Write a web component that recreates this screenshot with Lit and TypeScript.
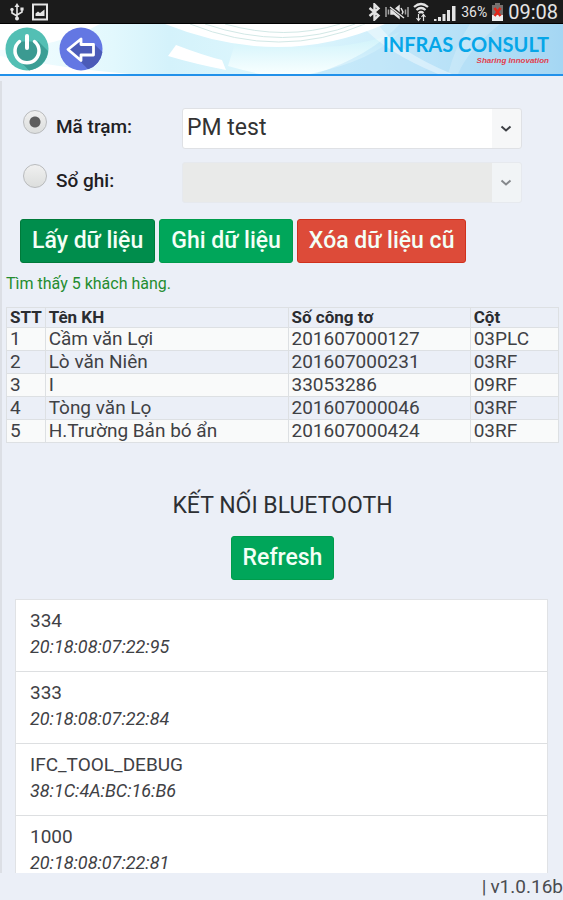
import { LitElement, html, css } from "lit";
import { customElement, state } from "lit/decorators.js";

const customers = [
  ["1", "Cầm văn Lợi", "201607000127", "03PLC"],
  ["2", "Lò văn Niên", "201607000231", "03RF"],
  ["3", "I", "33053286", "09RF"],
  ["4", "Tòng văn Lọ", "201607000046", "03RF"],
  ["5", "H.Trường Bản bó ẩn", "201607000424", "03RF"],
];

const devices = [
  ["334", "20:18:08:07:22:95"],
  ["333", "20:18:08:07:22:84"],
  ["IFC_TOOL_DEBUG", "38:1C:4A:BC:16:B6"],
  ["1000", "20:18:08:07:22:81"],
];

@customElement("status-bar")
class StatusBar extends LitElement {
  static styles = css`
    :host {
      display: flex;
      align-items: center;
      justify-content: space-between;
      height: 24px;
      padding: 0 5px 0 9px;
      background: #1b1b1b;
      border-bottom: 1px solid #000;
      box-sizing: border-box;
      color: #e4e4e4;
      font-family: Roboto, sans-serif;
    }
    .group { display: flex; align-items: center; gap: 4px; }
    .left { gap: 7px; }
    svg { display: block; }
    .pct { font-size: 14px; }
    .clock { font-size: 20px; line-height: 24px; }
  `;
  render() {
    return html`
      <div class="group left">
        <svg width="16" height="18" viewBox="0 0 16 18" fill="none" stroke="#e4e4e4" stroke-width="1.6">
          <path d="M8 3V15M3 7V10L8 13M13 6V9L8 12" />
          <path d="M8 0L10.500 4H5.500Z" fill="#e4e4e4" stroke="none" />
          <circle cx="8" cy="15.500" r="2" fill="#e4e4e4" stroke="none" />
          <circle cx="3" cy="6.500" r="1.700" fill="#e4e4e4" stroke="none" />
          <path d="M11.400 4.500h3.200v3h-3.200z" fill="#e4e4e4" stroke="none" />
        </svg>
        <svg width="16" height="18" viewBox="0 0 16 18">
          <rect x="1" y="1.500" width="14" height="15" fill="none" stroke="#e4e4e4" stroke-width="2" />
          <path d="M3.500 13V10.500L6 8.500L8 10L12.500 6.500V13Z" fill="#e4e4e4" />
        </svg>
      </div>
      <div class="group">
        <svg width="13" height="18" viewBox="0 0 13 18" fill="none" stroke="#e4e4e4" stroke-width="2.400">
          <path d="M1.500 5L10.500 12.500L6.500 16.500V1.500L10.500 5.500L1.500 13" />
        </svg>
        <svg width="24" height="16" viewBox="0 0 24 16" fill="none" stroke="#e4e4e4" stroke-width="1.500">
          <path d="M1 3V13M3.500 5.500V10.500M23 3V13M20.500 5.500V10.500" stroke="#a5a5a5" />
          <path d="M6 6H9L14 2V14L9 10H6Z" fill="#e4e4e4" />
          <path d="M16 4L18 8L16 12" />
          <path d="M5 2L19 14" stroke="#1b1b1b" stroke-width="3" />
          <path d="M5 3L19 14" />
        </svg>
        <svg width="16" height="20" viewBox="0 0 16 20" fill="none" stroke="#e4e4e4" stroke-width="2.200">
          <path d="M1 5Q8-1 15 5M3.500 8Q8 4 12.500 8M5.500 11Q8 9 10.500 11" />
          <path d="M5.500 12V18M3.500 16L5.500 18.500L7.500 16M10.500 19V13M8.500 15L10.500 12.500L12.500 15" stroke-width="1.200" />
        </svg>
        <svg width="24" height="18" viewBox="0 0 24 18" fill="#e4e4e4">
          <path d="M1 16h2.500v2H1zM5 14h3v4H5zM9.500 11h3v7h-3zM14 7h3v11h-3zM19 3h3.500v15H19z" />
        </svg>
        <span class="pct">36%</span>
        <svg width="13" height="18" viewBox="0 0 13 18">
          <path d="M4 0H9V2H12V18H1V2H4Z" fill="#77706e" />
          <path d="M1 12H12V18H1Z" fill="#eee" />
          <path d="M3.500 5L9.500 13M9.500 5L3.500 13" stroke="#e32619" stroke-width="2.500" />
        </svg>
        <span class="clock">09:08</span>
      </div>
    `;
  }
}

@customElement("app-banner")
class AppBanner extends LitElement {
  static styles = css`
    :host {
      display: flex;
      position: relative;
      align-items: center;
      height: 52px;
      padding: 0 14px 0 5px;
      gap: 10px;
      box-sizing: border-box;
      border-bottom: 2px solid #2291ea;
      background: #dff4fc;
    }
    .sky { position: absolute; inset: 0; width: 100%; height: 100%; }
    .round {
      position: relative;
      width: 44px;
      height: 44px;
      padding: 0;
      border: 0;
      background: none;
    }
    .round svg { display: block; }
    .brand {
      position: relative;
      margin-left: auto;
      display: flex;
      flex-direction: column;
      align-items: flex-end;
    }
    .name {
      font: bold 20px/24px "Liberation Sans Narrow", Lato, sans-serif;
      color: #06a6e8;
    }
    .tag {
      font: italic bold 8px/10px "Liberation Sans", sans-serif;
      color: #e2404e;
    }
  `;
  render() {
    return html`
      <svg class="sky" viewBox="0 0 563 50" preserveAspectRatio="none" aria-hidden="true">
        <defs>
          <linearGradient id="g" x1="0" x2="1" y1="0" y2="0">
            <stop offset="0" stop-color="#f4fdff" />
            <stop offset=".2" stop-color="#e2f8fd" />
            <stop offset=".3" stop-color="#d4f2fb" />
            <stop offset=".5" stop-color="#def7fd" />
            <stop offset=".75" stop-color="#c9eafa" />
            <stop offset="1" stop-color="#a3d5f1" />
          </linearGradient>
          <linearGradient id="w" x1="0" x2="0" y1="0" y2="1">
            <stop offset=".2" stop-color="#d4f4fb" />
            <stop offset="1" stop-color="#f8ffff" />
          </linearGradient>
        </defs>
        <rect width="563" height="50" fill="url(#g)" />
        <path d="M0 0H100Q60 22 0 26Z" fill="#fff" />
        <path d="M0 50V32Q60 44 130 50Z" fill="#fff" />
        <path d="M176 21Q205 32 222 36L226 46Q195 40 168 32Z" fill="#fff" />
        <path d="M236 16Q285 26 340 22Q380 16 400 8Q375 36 310 50H260Q242 46 228 42Z" fill="url(#w)" />
        <path d="M165 0Q280 46 385 0Z" fill="#fff" />
        <path d="M190 0Q280 36 365 0M205 0Q285 27 355 0M225 0Q285 17 340 0" fill="none" stroke="#d2e8e6" stroke-width="1" />
        <path d="M563 0V50H315Q370 32 400 0Z" fill="#a8d9f5" opacity=".35" />
        <path d="M448 50Q456 20 470 0H500Q468 26 458 50Z" fill="#fff" opacity=".2" />
        <path d="M360 0Q385 28 438 50H452Q395 26 378 0Z" fill="#fff" opacity=".4" />
      </svg>
      <button class="round" aria-label="Thoát">
        <svg width="44" height="44" viewBox="0 0 44 44">
          <circle cx="22" cy="22" r="21.500" fill="#53bfb4" />
          <path d="M33 14L43 24A21.500 21.500 0 0 1 24 43.400L14 33Z" fill="#3b9e95" />
          <path d="M14.500 14.500A12 12 0 1 0 29.500 14.500" fill="#3b9a91" stroke="#fff" stroke-width="3.500" stroke-linecap="round" />
          <path d="M22 9V21" stroke="#fff" stroke-width="4" stroke-linecap="round" />
        </svg>
      </button>
      <button class="round" aria-label="Quay lại">
        <svg width="44" height="44" viewBox="0 0 44 44">
          <circle cx="22" cy="22" r="21.500" fill="#6377e3" />
          <path d="M35 17L43.400 25A21.500 21.500 0 0 1 29 42.300L16 29Z" fill="#4b5bb8" />
          <path d="M9 22.500L22 12V17.500H34.500V28H22V33.500Z" fill="#4b5bb8" stroke="#fff" stroke-width="2.800" stroke-linejoin="round" />
        </svg>
      </button>
      <div class="brand">
        <span class="name">INFRAS CONSULT</span>
        <span class="tag">Sharing Innovation</span>
      </div>
    `;
  }
}

@customElement("app-root")
class AppRoot extends LitElement {
  @state() mode = "station";

  static styles = css`
    :host {
      display: flex;
      flex-direction: column;
      height: 100vh;
      overflow: hidden;
      background: #ebeff7;
      color: #2d2f33;
      font-family: Roboto, sans-serif;
    }
    main {
      flex: 1;
      min-height: 0;
      margin-top: 5px;
      border-left: 2px solid #dcdfe5;
      overflow-y: auto;
      scrollbar-width: none;
    }
    .form {
      display: grid;
      grid-template-columns: 24px 117px 1fr;
      column-gap: 9px;
      row-gap: 13px;
      padding: 27px 41px 0 21px;
    }
    .radio {
      appearance: none;
      width: 24px;
      height: 24px;
      margin: 2px 0 0;
      border: 1px solid #b9bbbd;
      border-radius: 50%;
      background: linear-gradient(#f0f0f0, #dcdedd);
    }
    .radio:checked {
      background: radial-gradient(circle, #5e5e5e 5px, transparent 6px), linear-gradient(#f0f0f0, #dcdedd);
    }
    .label { font-size: 19px; font-weight: 500; line-height: 38px; color: #1f2023; }
    .pick { position: relative; display: grid; }
    .pick select {
      appearance: none;
      height: 41px;
      width: 100%;
      padding: 0 34px 3px 4px;
      border: 1px solid #dfe1e5;
      border-radius: 3px;
      background: linear-gradient(90deg, transparent calc(100% - 29px), #f6f7f8 0) #fff;
      color: #333;
      font: 23px Roboto, sans-serif;
    }
    .pick select:disabled {
      border-color: #e6e9ee;
      background: linear-gradient(90deg, transparent calc(100% - 29px), #f1f4f6 0) #e9eae9;
      opacity: 1;
    }
    .pick svg { position: absolute; right: 10px; top: 17px; pointer-events: none; }
    .actions { display: flex; gap: 4px; padding: 16px 0 0 18px; }
    .btn {
      height: 44px;
      padding: 0 11px 2px;
      border: 1px solid #009c4c;
      border-radius: 3px;
      background: #00a65a;
      color: #f3fff6;
      font: 500 23px Roboto, sans-serif;
      white-space: nowrap;
    }
    .btn.dark { background: #008d4c; border-color: #007a3a; }
    .btn.red { background: #dd4b39; border-color: #d0301c; }
    .found { margin: 0; padding: 10px 4px 0; font-size: 16px; line-height: 22px; color: #248c2f; }
    table {
      width: calc(100% - 8px);
      margin: 12px 0 0 4px;
      border-collapse: collapse;
      table-layout: fixed;
    }
    th, td {
      border: 1px solid #dde0e3;
      padding: 0 3px;
      text-align: left;
      line-height: 22px;
      font-size: 19px;
      white-space: nowrap;
      color: #3f4145;
    }
    th { font-size: 17px; line-height: 19px; font-weight: 700; color: #2a2c30; }
    tbody tr:nth-child(odd) { background: #f9fafa; }
    .c1 { width: 7%; }
    .c2 { width: 44%; }
    .c3 { width: 33%; }
    .c4 { width: 16%; }
    h2 { margin: 48px 0 15px; font-size: 23px; line-height: 30px; font-weight: 400; text-align: center; }
    .center { display: flex; justify-content: center; }
    ul {
      list-style: none;
      margin: 19px 15px 0 13px;
      padding: 0;
      background: #fff;
      border: 1px solid #e0e2e5;
    }
    li { padding: 8px 14px 11px; font-size: 19px; line-height: 26px; color: #3f4145; }
    li + li { border-top: 1px solid #dddfe1; }
    .mac { display: block; font-size: 18px; font-style: italic; }
    footer {
      display: flex;
      justify-content: flex-end;
      align-items: center;
      gap: 4px;
      height: 27px;
      font-size: 19px;
      color: #4a4c50;
    }
  `;

  chevron(color: string) {
    return html`<svg width="12" height="8" viewBox="0 0 12 8" aria-hidden="true">
      <path d="M1.500 1.500L6 5.500L10.500 1.500" fill="none" stroke=${color} stroke-width="2" />
    </svg>`;
  }

  render() {
    return html`
      <status-bar></status-bar>
      <app-banner></app-banner>
      <main>
        <div class="form">
          <input class="radio" type="radio" name="mode" id="station" .checked=${this.mode === "station"}
            @change=${() => (this.mode = "station")} />
          <label class="label" for="station">Mã trạm:</label>
          <div class="pick">
            <select aria-label="Mã trạm" ?disabled=${this.mode !== "station"}><option>PM test</option></select>
            ${this.chevron("#3c3f44")}
          </div>
          <input class="radio" type="radio" name="mode" id="book" .checked=${this.mode === "book"}
            @change=${() => (this.mode = "book")} />
          <label class="label" for="book">Sổ ghi:</label>
          <div class="pick">
            <select aria-label="Sổ ghi" ?disabled=${this.mode !== "book"}></select>
            ${this.chevron("#85888c")}
          </div>
        </div>
        <div class="actions">
          <button class="btn dark">Lấy dữ liệu</button>
          <button class="btn">Ghi dữ liệu</button>
          <button class="btn red">Xóa dữ liệu cũ</button>
        </div>
        <p class="found">Tìm thấy 5 khách hàng.</p>
        <table>
          <colgroup>
            <col class="c1" />
            <col class="c2" />
            <col class="c3" />
            <col class="c4" />
          </colgroup>
          <thead>
            <tr>
              <th>STT</th>
              <th>Tên KH</th>
              <th>Số công tơ</th>
              <th>Cột</th>
            </tr>
          </thead>
          <tbody>
            ${customers.map((row) => html`<tr>${row.map((cell) => html`<td>${cell}</td>`)}</tr>`)}
          </tbody>
        </table>
        <h2>KẾT NỐI BLUETOOTH</h2>
        <div class="center"><button class="btn">Refresh</button></div>
        <ul>
          ${devices.map(([name, mac]) => html`<li>${name}<span class="mac">${mac}</span></li>`)}
        </ul>
      </main>
      <footer><span>|</span><span>v1.0.16b</span></footer>
    `;
  }
}
